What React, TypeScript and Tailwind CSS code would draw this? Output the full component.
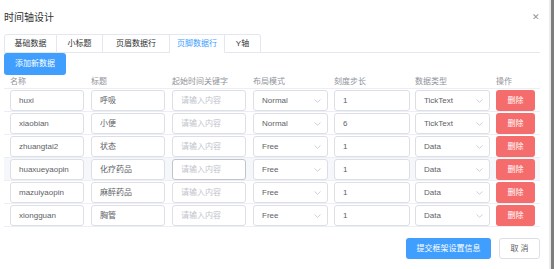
import React from "react";

const font = { fontFamily: '"Liberation Sans", "Noto Sans CJK SC", sans-serif' };

type Row = { name: string; title: string; mode: string; step: string; type: string; hover?: boolean };

const rows: Row[] = [
  { name: "huxi", title: "呼吸", mode: "Normal", step: "1", type: "TickText" },
  { name: "xiaobian", title: "小便", mode: "Normal", step: "6", type: "TickText" },
  { name: "zhuangtai2", title: "状态", mode: "Free", step: "1", type: "Data" },
  { name: "huaxueyaopin", title: "化疗药品", mode: "Free", step: "1", type: "Data", hover: true },
  { name: "mazuiyaopin", title: "麻醉药品", mode: "Free", step: "1", type: "Data" },
  { name: "xiongguan", title: "胸管", mode: "Free", step: "1", type: "Data" },
];

const tabs = [
  { label: "基础数据", w: "w-[53px]" },
  { label: "小标题", w: "w-[46px]" },
  { label: "页眉数据行", w: "w-[67px]" },
  { label: "页脚数据行", w: "w-[55px]", active: true },
  { label: "Y轴", w: "w-[36px]" },
];

function Chevron() {
  return (
    <svg width="7" height="4" viewBox="0 0 7 4" className="shrink-0">
      <path d="M0.5 0.5 L3.5 3.3 L6.5 0.5" fill="none" stroke="#c0c4cc" strokeWidth="0.8" />
    </svg>
  );
}

function Input({ value, w, placeholder, strong }: { value?: string; w: string; placeholder?: string; strong?: boolean }) {
  return (
    <div
      className={`${w} h-[21px] rounded-[3px] border ${strong ? "border-[#c0c4cc]" : "border-[#dcdfe6]"} bg-white flex items-center pl-[8px] text-[8px] ${value ? "text-[#606266]" : "text-[#c0c4cc]"}`}
    >
      {value ?? placeholder}
    </div>
  );
}

function Select({ value, w }: { value: string; w: string }) {
  return (
    <div className={`${w} h-[21px] rounded-[3px] border border-[#dcdfe6] bg-white flex items-center justify-between pl-[8px] pr-[6px] text-[8px] text-[#606266]`}>
      <span>{value}</span>
      <Chevron />
    </div>
  );
}

export default function App() {
  return (
    <div className="flex w-[554px] h-[269px] bg-white overflow-hidden" style={font}>
      <div className="w-[549px] pl-[4px] pr-[9px] flex flex-col">
        <div className="h-[34px] flex items-center justify-between">
          <span className="text-[10px] text-[#303133]">时间轴设计</span>
          <span className="text-[9px] leading-none text-[#909399]">✕</span>
        </div>
        <div className="h-[19px] flex">
          {tabs.map((t, i) => (
            <div
              key={t.label}
              className={`${t.w} h-full flex items-center justify-center text-[8px] border-t border-r border-[#e4e7ed] ${i === 0 ? "border-l rounded-tl-[3px]" : ""} ${i === tabs.length - 1 ? "rounded-tr-[3px]" : ""} ${t.active ? "text-[#409eff] border-b border-b-white" : "text-[#303133] border-b"}`}
            >
              {t.label}
            </div>
          ))}
          <div className="flex-1 border-b border-[#e4e7ed]" />
        </div>
        <div className="h-[22px] w-[62px] rounded-[3px] bg-[#409eff] text-white text-[8px] flex items-center justify-center">
          添加新数据
        </div>
        <div className="h-[14px] flex items-center pl-[6px] border-b border-[#ebeef5] text-[8px] text-[#909399]">
          <div className="w-[81px]">名称</div>
          <div className="w-[81px]">标题</div>
          <div className="w-[81px]">起始时间关键字</div>
          <div className="w-[81px]">布局模式</div>
          <div className="w-[81px]">刻度步长</div>
          <div className="w-[81px]">数据类型</div>
          <div className="w-[39px]">操作</div>
        </div>
        {rows.map((r) => (
          <div
            key={r.name}
            className={`h-[23px] flex items-start pt-[1px] pl-[6px] border-b border-[#ebeef5] ${r.hover ? "bg-[#f5f7fa]" : ""}`}
          >
            <div className="w-[81px]"><Input value={r.name} w="w-[74px]" /></div>
            <div className="w-[81px]"><Input value={r.title} w="w-[74px]" /></div>
            <div className="w-[81px]"><Input placeholder="请输入内容" w="w-[74px]" strong={r.hover} /></div>
            <div className="w-[81px]"><Select value={r.mode} w="w-[75px]" /></div>
            <div className="w-[81px]"><Input value={r.step} w="w-[76px]" /></div>
            <div className="w-[81px]"><Select value={r.type} w="w-[75px]" /></div>
            <div className="w-[39px] h-[21px] rounded-[3px] bg-[#f56c6c] text-white text-[8px] flex items-center justify-center">
              删除
            </div>
          </div>
        ))}
        <div className="mt-[11px] flex justify-end gap-[8px]">
          <div className="w-[85px] h-[21px] rounded-[3px] bg-[#409eff] text-white text-[8px] flex items-center justify-center">
            提交框架设置信息
          </div>
          <div className="w-[41px] h-[21px] rounded-[3px] border border-[#dcdfe6] bg-white text-[#606266] text-[8px] flex items-center justify-center">
            取 消
          </div>
        </div>
      </div>
      <div className="w-[2px] bg-[#ececec]" />
      <div className="w-[3px] bg-[#7d7d7d]" />
    </div>
  );
}
